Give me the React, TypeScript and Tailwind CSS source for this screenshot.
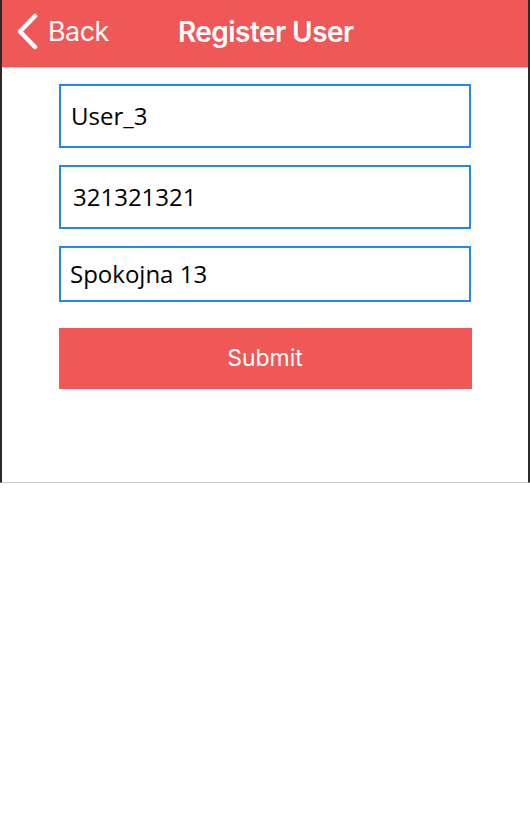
import React from "react";

export default function App() {
  const inputFont = { fontFamily: '"Open Sans", "Noto Sans", sans-serif' };
  return (
    <div className="w-[530px] h-[824px] bg-white">
      <div className="h-[483px] border-l-2 border-r-2 border-l-[#2a2a2a] border-r-[#2a2a2a] border-b border-b-[#c6cbd0] flex flex-col">
        <div
          className="h-[68px] bg-[#f05757] border-b border-b-[#d9d9d9] flex items-center relative pb-[4px]"
          style={{ fontFamily: 'Inter, "Liberation Sans", sans-serif' }}
        >
          <div className="flex items-center pl-[13px] text-white">
            <svg width="24" height="38" viewBox="0 0 24 38" className="mr-[9px]">
              <path d="M20 3 L5 18.5 L20 34" stroke="white" strokeWidth="4.5" fill="none" strokeLinecap="round" strokeLinejoin="round" />
            </svg>
            <span className="text-[27px] leading-none tracking-[-0.6px]">Back</span>
          </div>
          <div className="absolute left-[176px] top-0 h-full pb-[4px] flex items-center text-white text-[28px] font-semibold leading-none tracking-[-0.55px]">
            Register User
          </div>
        </div>
        <div className="flex flex-col items-center pt-[16px]" style={inputFont}>
          <div className="w-[412px] h-[64px] border-2 border-[#1f87fb] flex items-center pl-[10px] text-[24px] text-black">
            User_3
          </div>
          <div className="w-[412px] h-[64px] mt-[17px] border-2 border-[#1f87fb] flex items-center pl-[12px] text-[24px] text-black">
            321321321
          </div>
          <div className="w-[412px] h-[56px] mt-[17px] border-2 border-[#1f87fb] flex items-center pl-[9px] text-[24px] text-black">
            Spokojna 13
          </div>
          <div
            className="w-[413px] h-[61px] mt-[26px] bg-[#f05757] flex items-center justify-center text-white text-[23px]"
            style={{ fontFamily: 'Inter, "Liberation Sans", sans-serif' }}
          >
            Submit
          </div>
        </div>
      </div>
    </div>
  );
}
